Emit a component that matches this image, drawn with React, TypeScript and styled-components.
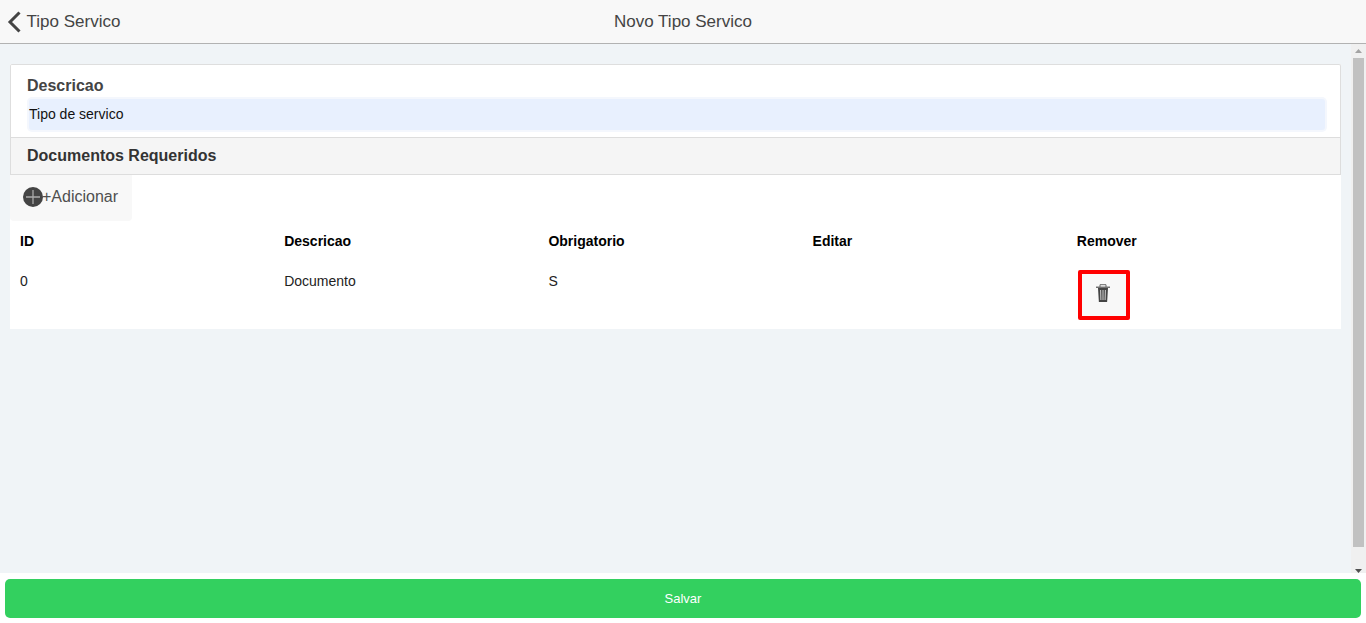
import React from "react";
import styled, { createGlobalStyle } from "styled-components";

const Global = createGlobalStyle`
  html, body { margin: 0; padding: 0; height: 100%; overflow: hidden; }
  body { font-family: "Liberation Sans", Arial, sans-serif; background: #fff; }
  #root { height: 100%; }
`;

const Page = styled.div`
  height: 623px;
  display: flex;
  flex-direction: column;
  background: #fff;
`;

const Header = styled.header`
  height: 43px;
  flex: none;
  box-sizing: content-box;
  background: #f8f8f8;
  border-bottom: 1px solid #b2b2b2;
  position: relative;
  display: flex;
  align-items: center;
  justify-content: center;
`;

const BackLink = styled.div`
  position: absolute;
  left: 7px;
  top: 0;
  height: 43px;
  display: flex;
  align-items: center;
  gap: 5.6px;
  color: #444;
  font-size: 17px;
`;

const Title = styled.h1`
  margin: 0;
  font-size: 17px;
  font-weight: 400;
  color: #444;
`;

const Content = styled.main`
  height: 529px;
  flex: none;
  background: #f0f4f7;
  display: flex;
`;

const Inner = styled.div`
  flex: 1;
  min-width: 0;
  box-sizing: border-box;
  padding: 20px 10px 0 10px;
`;

const ScrollTrack = styled.div`
  width: 15px;
  flex: none;
  background: #f0f0f0;
  display: flex;
  flex-direction: column;
  align-items: center;
`;

const ScrollButton = styled.div<{ $end?: boolean }>`
  height: 14px;
  flex: none;
  display: flex;
  align-items: ${(p) => (p.$end ? "flex-end" : "center")};
  justify-content: center;
`;

const ScrollThumb = styled.div`
  width: 11px;
  height: 489px;
  flex: none;
  background: #c1c1c1;
`;

const ScrollSpacer = styled.div`
  flex: 1;
`;

const Card = styled.section`
  background: #fff;
`;

const Field = styled.div`
  padding: 12px 15px 6px 16px;
  height: 73px;
  box-sizing: border-box;
  border: 1px solid #dedede;
  border-bottom: 0;
  border-radius: 2px 2px 0 0;
`;

const Label = styled.label`
  display: block;
  font-size: 16px;
  font-weight: 700;
  color: #444;
  line-height: 18px;
  margin-bottom: 4px;
`;

const Input = styled.div`
  height: 31px;
  margin-left: 2px;
  background: #e8f0fe;
  border-radius: 3px;
  box-shadow: 0 0 0 2px #f4f7fd;
  font-size: 14px;
  line-height: 30px;
  color: #111;
`;

const Divider = styled.div`
  height: 38px;
  box-sizing: border-box;
  display: flex;
  align-items: center;
  padding-left: 16px;
  background: #f5f5f5;
  border: 1px solid #dddddd;
  font-size: 16px;
  font-weight: 700;
  color: #333;
`;

const AddButton = styled.button`
  height: 46px;
  width: 122px;
  border: 0;
  padding: 0 0 2px 13px;
  background: #f8f8f8;
  border-radius: 0 0 4px 4px;
  display: flex;
  align-items: center;
  font-family: inherit;
  font-size: 16px;
  color: #4f4f4f;
`;

const Table = styled.div`
  display: grid;
  grid-template-columns: repeat(5, 1fr);
  padding-left: 10px;
`;

const Th = styled.div`
  height: 40px;
  display: flex;
  align-items: center;
  font-size: 14px;
  font-weight: 700;
  color: #000;
`;

const Td = styled.div`
  height: 68px;
  padding-top: 12px;
  box-sizing: border-box;
  font-size: 14px;
  line-height: 16px;
  color: #222;
`;

const TrashCell = styled.div`
  height: 68px;
  padding-top: 9px;
  box-sizing: border-box;
`;

const TrashButton = styled.button`
  width: 52px;
  height: 50px;
  margin-left: 1px;
  padding: 0 2px 4px 0;
  box-sizing: border-box;
  border: 4px solid #ff0000;
  border-radius: 2px;
  background: #f8f8f8;
  display: flex;
  align-items: center;
  justify-content: center;
`;

const Footer = styled.footer`
  flex: 1;
  padding: 6px 5px 5px;
  display: flex;
  box-sizing: border-box;
`;

const SaveButton = styled.button`
  flex: 1;
  border: 0;
  border-radius: 5px;
  background: #33d05f;
  color: #fff;
  font-family: inherit;
  font-size: 13px;
`;

const PlusIcon = styled.svg`
  flex: none;
  margin: 0 -1px 1px 0;
`;

const Chevron = () => (
  <svg width="14" height="22" viewBox="0 0 14 22">
    <path d="M12.5 1.5 L3 11 L12.5 20.5" fill="none" stroke="#444" strokeWidth="3" />
  </svg>
);

const PlusCircle = () => (
  <PlusIcon width="20" height="20" viewBox="0 0 20 20">
    <circle cx="10" cy="10" r="10" fill="#444" />
    <path d="M10 3v14M3 10h14" stroke="#aaa" strokeWidth="1.3" />
  </PlusIcon>
);

const Trash = () => (
  <svg width="14" height="18" viewBox="0 0 14 18">
    <path d="M0 3.2h14" stroke="#444" strokeWidth="1.1" />
    <path d="M4 3V.7h6V3" fill="none" stroke="#666" strokeWidth="1" />
    <path d="M2 4h10l-.9 14H2.9z" fill="#444" />
    <path d="M4.6 6l.3 10M7 6v10M9.4 6l-.3 10" stroke="#c8c8c8" strokeWidth="1.1" />
  </svg>
);

const ArrowUp = () => (
  <svg width="7" height="4" viewBox="0 0 7 4">
    <path d="M0 4h7L3.5 0z" fill="#a3a3a3" />
  </svg>
);

const ArrowDown = () => (
  <svg width="7" height="4" viewBox="0 0 7 4">
    <path d="M0 0h7L3.5 4z" fill="#505050" />
  </svg>
);

export default function App() {
  return (
    <Page>
      <Global />
      <Header>
        <BackLink>
          <Chevron />
          Tipo Servico
        </BackLink>
        <Title>Novo Tipo Servico</Title>
      </Header>
      <Content>
        <Inner>
          <Card>
            <Field>
              <Label>Descricao</Label>
              <Input>Tipo de servico</Input>
            </Field>
            <Divider>Documentos Requeridos</Divider>
            <AddButton>
              <PlusCircle />
              +Adicionar
            </AddButton>
            <Table>
              <Th>ID</Th>
              <Th>Descricao</Th>
              <Th>Obrigatorio</Th>
              <Th>Editar</Th>
              <Th>Remover</Th>
              <Td>0</Td>
              <Td>Documento</Td>
              <Td>S</Td>
              <Td />
              <TrashCell>
                <TrashButton>
                  <Trash />
                </TrashButton>
              </TrashCell>
            </Table>
          </Card>
        </Inner>
        <ScrollTrack>
          <ScrollButton>
            <ArrowUp />
          </ScrollButton>
          <ScrollThumb />
          <ScrollSpacer />
          <ScrollButton $end>
            <ArrowDown />
          </ScrollButton>
        </ScrollTrack>
      </Content>
      <Footer>
        <SaveButton>Salvar</SaveButton>
      </Footer>
    </Page>
  );
}
